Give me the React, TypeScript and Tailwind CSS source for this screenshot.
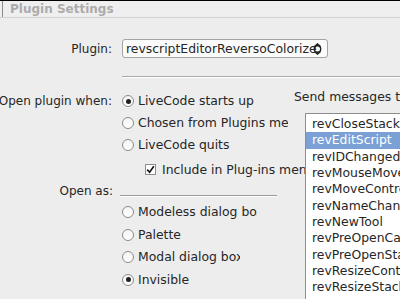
import React from "react";

const font = { fontFamily: '"DejaVu Sans", "Liberation Sans", sans-serif' };

function Radio({ checked, label, w }: { checked?: boolean; label: string; w: string }) {
  return (
    <div className="flex h-full items-center">
      <div className="flex h-[12px] w-[12px] shrink-0 items-center justify-center rounded-full border border-[#8c8c8c] bg-gradient-to-b from-[#f4f4f4] to-[#ffffff]">
        {checked && <div className="h-[5px] w-[5px] rounded-full bg-[#202020]" />}
      </div>
      <div className={`ml-[4px] overflow-hidden whitespace-nowrap ${w}`}>{label}</div>
    </div>
  );
}

const messages = [
  "revCloseStack",
  "revEditScript",
  "revIDChanged",
  "revMouseMove",
  "revMoveControl",
  "revNameChanged",
  "revNewTool",
  "revPreOpenCard",
  "revPreOpenStack",
  "revResizeControl",
  "revResizeStack",
];

export default function App() {
  return (
    <div
      className="relative h-[299px] w-[400px] overflow-hidden bg-[#ededed] text-[12px] leading-[14px] text-[#262626]"
      style={font}
    >
      {/* title bar */}
      <div className="flex h-[18px] border-t border-black border-b border-b-[#d2d2d2] bg-[#efefef]">
        <div className="ml-[2px] w-[1px] bg-[#8a8a8a]" />
        <div className="ml-[7px] flex items-center font-bold text-[#ababab]">Plugin Settings</div>
      </div>

      {/* plugin row */}
      <div className="mt-[21px] flex h-[19px] items-center">
        <div className="w-[112px] text-right">Plugin:</div>
        <div className="relative ml-[10px] flex h-[19px] w-[206px] items-center overflow-hidden rounded-[3px] border border-[#a3a3a3] bg-[#fbfbfb] pl-[3px] text-[12.4px]">
          <span className="whitespace-nowrap">revscriptEditorReversoColorize</span>
          <svg className="absolute right-[4px] top-[3px]" width="11" height="12" viewBox="0 0 11 12">
            <circle cx="5.5" cy="6" r="3.2" fill="none" stroke="#222" strokeWidth="1.4" />
            <path d="M2.5 3.5 L5.5 0.8 L8.5 3.5" fill="none" stroke="#222" strokeWidth="1.3" />
            <path d="M2.5 8.5 L5.5 11.2 L8.5 8.5" fill="none" stroke="#222" strokeWidth="1.3" />
          </svg>
        </div>
      </div>

      {/* separator */}
      <div className="ml-[122px] mt-[18px] h-[2px] border-t border-[#a8a8a8] border-b border-b-white" />

      {/* options section */}
      <div className="flex">
        <div className="w-[305px] shrink-0 overflow-hidden pt-[12px]">
          <div className="flex">
            <div className="w-[112px] shrink-0 whitespace-nowrap text-right">
              <div className="flex h-[22px] items-center justify-end">Open plugin when:</div>
            </div>
            <div className="ml-[10px] flex flex-col text-[12.4px]">
              <div className="h-[22px]"><Radio checked label="LiveCode starts up" w="w-[150px]" /></div>
              <div className="h-[22px]"><Radio label="Chosen from Plugins menu" w="w-[150px]" /></div>
              <div className="h-[22px]"><Radio label="LiveCode quits" w="w-[150px]" /></div>
            </div>
          </div>
          <div className="mt-[3px] flex h-[21px] items-center pl-[145px] text-[12.4px]">
            <div className="flex h-[11px] w-[11px] shrink-0 items-center justify-center border border-[#8c8c8c] bg-white">
              <svg width="9" height="9" viewBox="0 0 9 9">
                <path d="M1.2 4.6 L3.6 7.2 L7.8 1.2" fill="none" stroke="#111" strokeWidth="1.6" />
              </svg>
            </div>
            <div className="ml-[6px] whitespace-nowrap">Include in Plug-ins menu</div>
          </div>
          <div className="flex h-[21px] items-center">
            <div className="w-[113px] shrink-0 text-right">Open as:</div>
            <div className="ml-[7px] mt-[10px] h-[2px] w-[157px] border-t border-[#9a9a9a] border-b border-b-white" />
          </div>
          <div className="ml-[122px] flex flex-col text-[12.4px]">
            <div className="h-[22.5px]"><Radio label="Modeless dialog box" w="w-[119px]" /></div>
            <div className="h-[22.5px]"><Radio label="Palette" w="w-[119px]" /></div>
            <div className="h-[22.5px]"><Radio label="Modal dialog box" w="w-[102px]" /></div>
            <div className="h-[22.5px]"><Radio checked label="Invisible" w="w-[119px]" /></div>
          </div>
        </div>

        <div className="relative -ml-[11px] flex min-w-0 flex-1 flex-col pt-[12px]">
          <div className="whitespace-nowrap text-[12.4px]">Send messages to:</div>
          <div className="ml-[11px] mt-[9px] h-[200px] border-l border-t border-[#8d8d8d] bg-white pt-[2px] text-[12.4px]">
            {messages.map((m, i) => (
              <div
                key={m}
                className={`flex h-[16.3px] items-center whitespace-nowrap pl-[6px] ${
                  i === 1 ? "bg-[#7aa0d6] text-white" : ""
                }`}
              >
                {m}
              </div>
            ))}
          </div>
        </div>
      </div>
    </div>
  );
}
